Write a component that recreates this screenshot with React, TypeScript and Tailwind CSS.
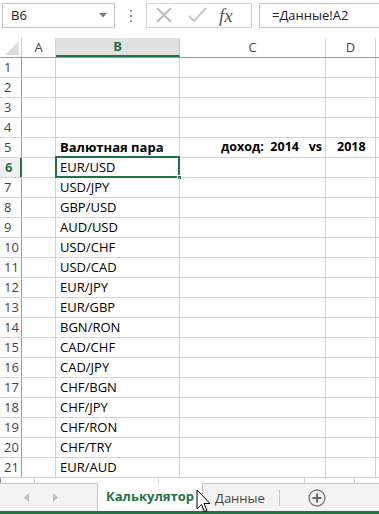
import React from "react";

const cols = [
  { key: "A", w: 34 },
  { key: "B", w: 124 },
  { key: "C", w: 146 },
  { key: "D", w: 50 },
  { key: "E", w: 40 },
];

const pairs = [
  "EUR/USD",
  "USD/JPY",
  "GBP/USD",
  "AUD/USD",
  "USD/CHF",
  "USD/CAD",
  "EUR/JPY",
  "EUR/GBP",
  "BGN/RON",
  "CAD/CHF",
  "CAD/JPY",
  "CHF/BGN",
  "CHF/JPY",
  "CHF/RON",
  "CHF/TRY",
  "EUR/AUD",
];

function FormulaBar() {
  return (
    <div className="flex h-[38px] items-start gap-0 bg-white pt-[3px]">
      <div className="ml-[2px] flex h-[25px] w-[113px] items-center justify-between border border-[#c6c6c6] pl-[8px] pr-[7px] text-[13px] text-[#222]">
        <span>B6</span>
        <svg width="8" height="5" viewBox="0 0 8 5">
          <path d="M0 0h8L4 4.5z" fill="#777" />
        </svg>
      </div>
      <div className="flex h-[25px] w-[31px] flex-col items-center justify-center gap-[3px]">
        <span className="h-[2px] w-[2px] bg-[#999]" />
        <span className="h-[2px] w-[2px] bg-[#999]" />
        <span className="h-[2px] w-[2px] bg-[#999]" />
      </div>
      <div className="flex h-[25px] w-[106px] items-center border border-[#d4d4d4]">
        <svg width="34" height="23" viewBox="0 0 34 23">
          <path d="M10 4l14 14M24 4L10 18" stroke="#bdbdbd" strokeWidth="2" fill="none" />
        </svg>
        <svg width="34" height="23" viewBox="0 0 34 23">
          <path d="M8 12l5 5 12-13" stroke="#c7c7c7" strokeWidth="2.2" fill="none" />
        </svg>
        <span className="ml-[4px] font-['Liberation_Serif',serif] text-[19px] italic leading-none text-[#555]">
          fx
        </span>
      </div>
      <div className="ml-[7px] flex h-[25px] flex-1 items-center border border-r-0 border-[#c6c6c6] pl-[12px] text-[13px] text-[#222]">
        =Данные!A2
      </div>
    </div>
  );
}

function HeaderRow() {
  return (
    <div className="flex h-[20px] border-b border-[#9b9b9b]">
      <div className="flex w-[22px] shrink-0 items-end justify-end border-r border-[#c6c6c6] pb-[2px] pr-[2px]">
        <svg width="14" height="14" viewBox="0 0 14 14">
          <path d="M14 0v14H0z" fill="#dcdcdc" />
        </svg>
      </div>
      {cols.map((c) => (
        <div
          key={c.key}
          style={{ width: c.w }}
          className={
            c.key === "B"
              ? "flex shrink-0 items-center justify-center border-r border-b-2 border-r-[#c6c6c6] border-b-[#217346] bg-[#e1e1e1] text-[13px] font-bold text-[#217346]"
              : "flex shrink-0 items-center justify-center border-r border-[#d4d4d4] text-[13px] text-[#444]"
          }
        >
          {c.key === "E" ? "" : c.key}
        </div>
      ))}
    </div>
  );
}

function Row({ n, cells }: { n: number; cells: React.ReactNode[] }) {
  const selected = n === 6;
  return (
    <div className="flex h-[20px] border-b border-[#d4d4d4]">
      <div
        className={
          selected
            ? "flex w-[22px] shrink-0 items-center border-r-2 border-[#217346] bg-[#f0f0f0] pl-[5px] text-[13px] font-bold text-[#217346]"
            : "flex w-[22px] shrink-0 items-center border-r border-[#9b9b9b] pl-[4px] text-[13px] text-[#444]"
        }
      >
        {n}
      </div>
      {cols.map((c, i) => (
        <div
          key={c.key}
          style={{ width: c.w }}
          className="relative flex shrink-0 items-center overflow-visible whitespace-nowrap border-r border-[#d4d4d4] text-[13px] text-black"
        >
          {cells[i]}
          {selected && c.key === "B" && (
            <>
              <div className="pointer-events-none absolute -left-[1px] -top-[2px] h-[22px] w-[125px] border-2 border-[#217346]" />
              <div className="absolute -bottom-[3px] -right-[3px] h-[5px] w-[5px] border border-white bg-[#217346]" />
            </>
          )}
        </div>
      ))}
    </div>
  );
}

export default function App() {
  const rows: { n: number; cells: React.ReactNode[] }[] = [];
  for (let n = 1; n <= 21; n++) {
    const cells: React.ReactNode[] = [null, null, null, null, null];
    if (n === 5) {
      cells[1] = <span className="pl-[4px] font-bold">Валютная пара</span>;
      cells[2] = (
        <span className="flex w-full justify-end pr-[3px] text-[12.5px] font-bold">доход:&nbsp;&nbsp;2014&nbsp;&nbsp;&nbsp;vs</span>
      );
      cells[3] = <span className="pl-[11px] text-[12.5px] font-bold">2018</span>;
    }
    if (n >= 6) cells[1] = <span className="pl-[4px]">{pairs[n - 6]}</span>;
    rows.push({ n, cells });
  }

  return (
    <div className="relative h-[514px] w-[379px] overflow-hidden bg-white font-['Open_Sans',sans-serif]">
      <FormulaBar />
      <HeaderRow />
      {rows.map((r) => (
        <Row key={r.n} n={r.n} cells={r.cells} />
      ))}
      <div className="flex h-[5px]">
        <div className="w-[22px] border-r border-[#9b9b9b]" />
        {cols.map((c) => (
          <div key={c.key} style={{ width: c.w }} className="shrink-0 border-r border-[#d4d4d4]" />
        ))}
      </div>
      <div className="flex h-[28px] border-t border-[#c6c6c6] bg-[#f3f3f3]">
        <div className="flex w-[97px] items-center gap-[24px] pl-[24px]">
          <svg width="5" height="9" viewBox="0 0 5 9">
            <path d="M5 0v9L0 4.5z" fill="#bdbdbd" />
          </svg>
          <svg width="5" height="9" viewBox="0 0 5 9">
            <path d="M0 0v9l5-4.5z" fill="#bdbdbd" />
          </svg>
        </div>
        <div className="-mt-[1px] flex w-[105px] items-center justify-center border-l border-[#c6c6c6] bg-white text-[13px] font-bold text-[#217346]">
          Калькулятор
        </div>
        <div className="flex w-[75px] items-center border-l border-[#c6c6c6] pl-[12px] text-[13px] text-[#444]">
          <span className="border-r border-[#c6c6c6] pr-[14px] leading-[16px]">Данные</span>
        </div>
        <div className="flex flex-1 items-center pl-[31px]">
          <svg width="18" height="18" viewBox="0 0 18 18">
            <circle cx="9" cy="9" r="8" fill="none" stroke="#777" strokeWidth="1.3" />
            <path d="M9 4.5v9M4.5 9h9" stroke="#666" strokeWidth="2" />
          </svg>
        </div>
      </div>
      <div className="h-[3px] bg-[#217346]" />
      <svg className="absolute left-[196px] top-[489px]" width="14" height="25" viewBox="0 0 14 25">
        <path d="M1 1v19l4.5-4.5 3 7 2.5-1-3-7H14z" fill="#fff" stroke="#000" strokeWidth="1" />
      </svg>
    </div>
  );
}
